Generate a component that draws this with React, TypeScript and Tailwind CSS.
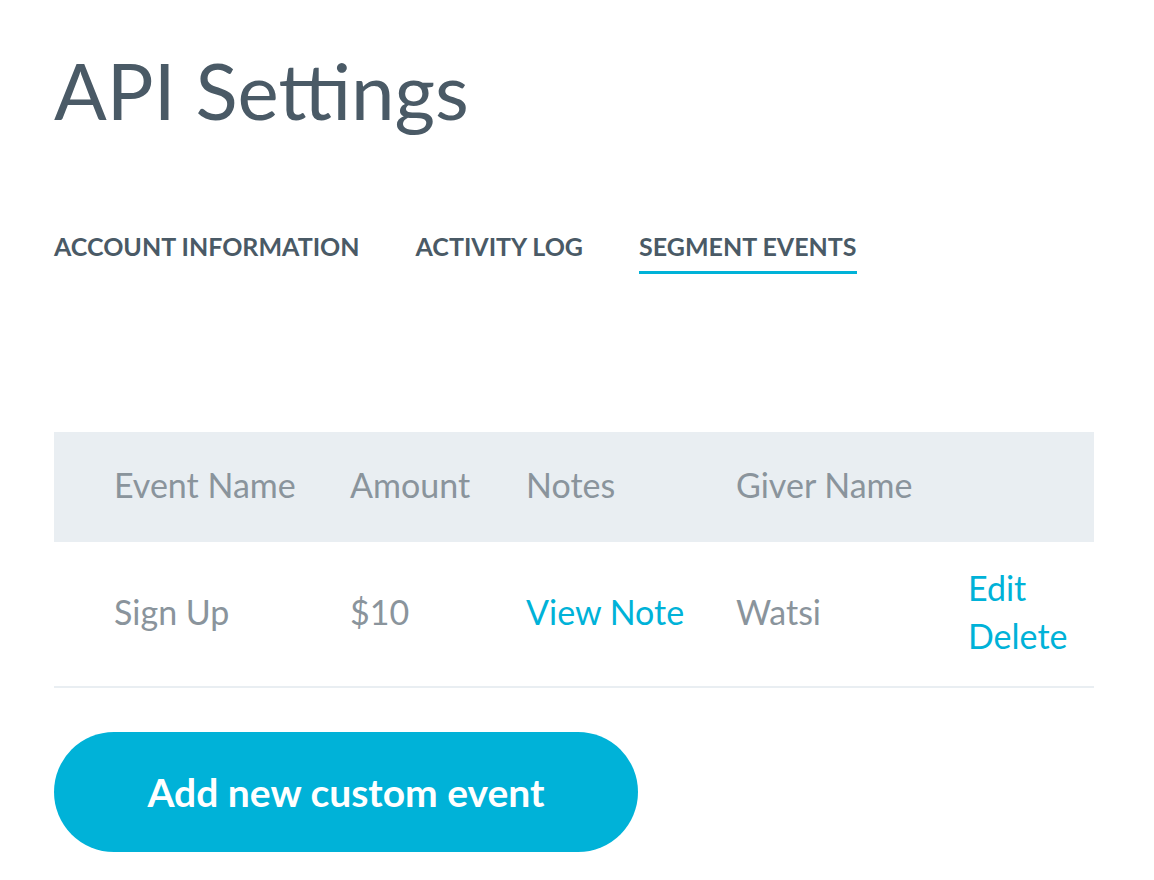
import React from 'react';

const tabs = [
  { label: 'Account Information', active: false },
  { label: 'Activity Log', active: false },
  { label: 'Segment Events', active: true },
];

const App: React.FC = () => {
  return (
    <div className="min-h-screen bg-white font-['Lato','Open_Sans',sans-serif] text-[#4a5a66]">
      <div className="pl-[54px] pr-[60px] pt-[42px]">
        <h1 className="text-[78px] leading-[96px] font-normal text-[#4a5a66] tracking-[0px]">API Settings</h1>

        <div className="mt-[93px] flex gap-[56px]">
          {tabs.map((tab) => (
            <div key={tab.label} className="flex flex-col">
              <span className="text-[25px] leading-[30px] font-bold uppercase text-[#4a5a66]">
                {tab.label}
              </span>
              <span className={`mt-[10px] h-[3px] ${tab.active ? 'bg-[#00b2d8]' : 'bg-transparent'}`} />
            </div>
          ))}
        </div>

        <div className="mt-[158px] w-[1040px]">
          <div className="grid grid-cols-[60px_236px_176px_210px_232px_1fr] items-center h-[110px] pb-[6px] bg-[#e9eef2] text-[34px] text-[#8a949c]">
            <div />
            <div>Event Name</div>
            <div>Amount</div>
            <div>Notes</div>
            <div>Giver Name</div>
            <div />
          </div>
          <div className="grid grid-cols-[60px_236px_176px_210px_232px_1fr] items-center h-[146px] pb-[5px] border-b-2 border-[#e9eef2] text-[34px] text-[#8a949c]">
            <div />
            <div>Sign Up</div>
            <div>$10</div>
            <div className="text-[#00b2d8]">View Note</div>
            <div>Watsi</div>
            <div className="flex flex-col leading-[48px] text-[#00b2d8]">
              <span>Edit</span>
              <span>Delete</span>
            </div>
          </div>
        </div>

        <button className="mt-[44px] flex h-[120px] w-[584px] items-center justify-center rounded-full bg-[#00b2d8] text-[39px] font-bold text-white">
          Add new custom event
        </button>
      </div>
    </div>
  );
};

export default App;
